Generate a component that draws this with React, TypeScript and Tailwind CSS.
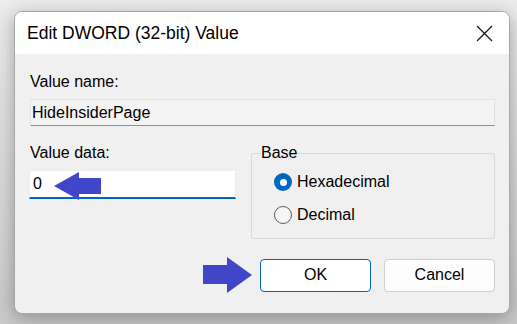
import React from "react";

function ArrowLeft() {
  return (
    <svg width="48" height="30" viewBox="0 0 48 30" className="absolute left-[24px] top-[0px]">
      <path d="M0 15 L25 1 L25 7 L47 7 L47 23 L25 23 L25 29 Z" fill="#4146c9" />
    </svg>
  );
}

function ArrowRight() {
  return (
    <svg width="51" height="36" viewBox="0 0 51 36">
      <path d="M50 18 L25 0 L25 8 L1 8 L1 27 L25 27 L25 36 Z" fill="#4146c9" />
    </svg>
  );
}

function Radio({ checked, label }: { checked?: boolean; label: string }) {
  return (
    <label className="flex items-center gap-[5px] h-[20px]">
      {checked ? (
        <span className="w-[18px] h-[18px] rounded-full bg-[#0067c0] flex items-center justify-center">
          <span className="w-[7px] h-[7px] rounded-full bg-white" />
        </span>
      ) : (
        <span className="w-[18px] h-[18px] rounded-full border border-[#5c5c5c] bg-[#f6f6f6]" />
      )}
      <span>{label}</span>
    </label>
  );
}

export default function App() {
  return (
    <div
      className="w-[517px] h-[324px] bg-gradient-to-b from-[#ececec] to-[#c9c9c9] pt-[11px] pl-[14px] overflow-hidden text-[16px] text-black"
      style={{ fontFamily: '"Liberation Sans", Arial, sans-serif' }}
    >
      <div className="w-[496px] h-[303px] rounded-[8px] border border-[#a8a8a8] bg-[#f0f0f0] overflow-hidden shadow-[0_4px_18px_rgba(0,0,0,0.3)] flex flex-col">
        {/* Title bar */}
        <div className="h-[42px] bg-white flex items-center justify-between pl-[12px] pr-[16px] shrink-0">
          <span className="text-[17.5px]">Edit DWORD (32-bit) Value</span>
          <svg width="17" height="17" viewBox="0 0 17 17">
            <path d="M1 1 L16 16 M16 1 L1 16" stroke="#1a1a1a" strokeWidth="1.3" />
          </svg>
        </div>

        {/* Body */}
        <div className="flex-1 pl-[15px] pr-[14px] pt-[18px]">
          <div className="h-[20px] leading-[20px]">Value name:</div>
          <div className="mt-[7px] h-[27px] bg-[#f3f3f3] border border-[#e2e2e2] border-b-[#8f8f8f] flex items-center pl-[1px] leading-none">
            HideInsiderPage
          </div>

          <div className="flex mt-[17px] gap-[15px]">
            <div className="w-[206px]">
              <div className="h-[20px] leading-[20px]">Value data:</div>
              <div className="relative mt-[7px] h-[29px] bg-white border border-[#ececec] border-b-2 border-b-[#0067c0] -ml-[1px] flex items-center pl-[3px]">
                0
                <ArrowLeft />
              </div>
            </div>
            <fieldset className="flex-1 h-[96px] border border-[#dadada] rounded-[2px] px-0 m-0">
              <legend className="ml-[9px] px-0 leading-[20px]">Base</legend>
              <div className="pl-[22px] pt-[9px] flex flex-col gap-[13px]">
                <Radio checked label="Hexadecimal" />
                <Radio label="Decimal" />
              </div>
            </fieldset>
          </div>

          <div className="flex justify-end items-center mt-[18px]">
            <div className="mr-[7px]">
              <ArrowRight />
            </div>
            <button className="w-[111px] h-[33px] bg-white border border-[#0067c0] rounded-[4px] mr-[13px]">
              OK
            </button>
            <button className="w-[111px] h-[33px] bg-[#fdfdfd] border border-[#d0d0d0] rounded-[4px]">
              Cancel
            </button>
          </div>
        </div>
      </div>
    </div>
  );
}
